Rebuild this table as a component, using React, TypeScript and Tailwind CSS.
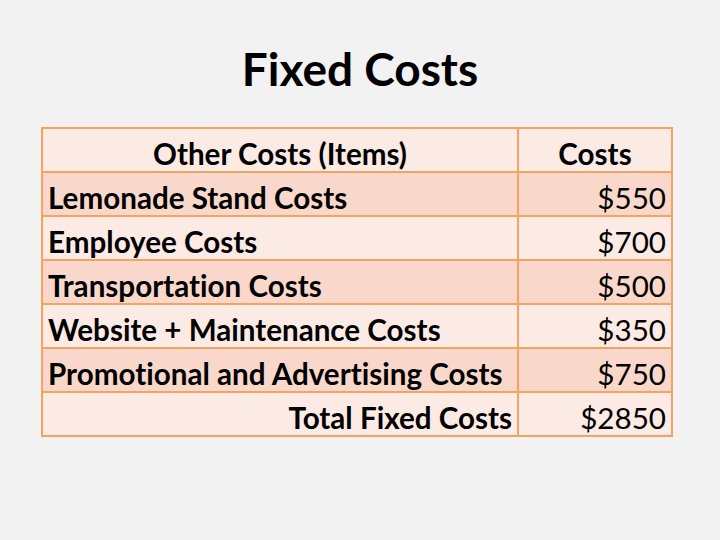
import React from "react";

const rows: [string, string][] = [
  ["Lemonade Stand Costs", "$550"],
  ["Employee Costs", "$700"],
  ["Transportation Costs", "$500"],
  ["Website + Maintenance Costs", "$350"],
  ["Promotional and Advertising Costs", "$750"],
];

export default function App() {
  return (
    <div
      className="w-[720px] h-[540px] bg-[#f2f2f2] flex flex-col items-center text-black [font-variant-ligatures:none]"
      style={{ fontFamily: "Lato, 'Open Sans', sans-serif" }}
    >
      <h1 className="mt-[40px] h-[58px] text-[46px] leading-[58px] font-bold">Fixed Costs</h1>
      <table className="mt-[29px] self-start ml-[41px] w-[632px] border-collapse border-2 border-[#f4a460] text-[29.6px] leading-none">
        <tbody>
          <tr className="h-[44px] bg-[#fcebe5]">
            <td className="w-[476px] border-2 border-[#f4a460] px-[5px] pt-[7px] text-center font-bold">Other Costs (Items)</td>
            <td className="border-2 border-[#f4a460] px-[5px] pt-[7px] text-center font-bold">Costs</td>
          </tr>
          {rows.map(([label, value], i) => (
            <tr key={label} className={i % 2 === 0 ? "h-[44px] bg-[#f9d8cb]" : "h-[44px] bg-[#fcebe5]"}>
              <td className="border-2 border-[#f4a460] px-[5px] pt-[7px] text-left font-bold">{label}</td>
              <td className="border-2 border-[#f4a460] px-[5px] pt-[7px] text-right">{value}</td>
            </tr>
          ))}
          <tr className="h-[44px] bg-[#fcebe5]">
            <td className="border-2 border-[#f4a460] px-[5px] pt-[7px] text-right font-bold">Total Fixed Costs</td>
            <td className="border-2 border-[#f4a460] px-[5px] pt-[7px] text-right">$2850</td>
          </tr>
        </tbody>
      </table>
    </div>
  );
}
